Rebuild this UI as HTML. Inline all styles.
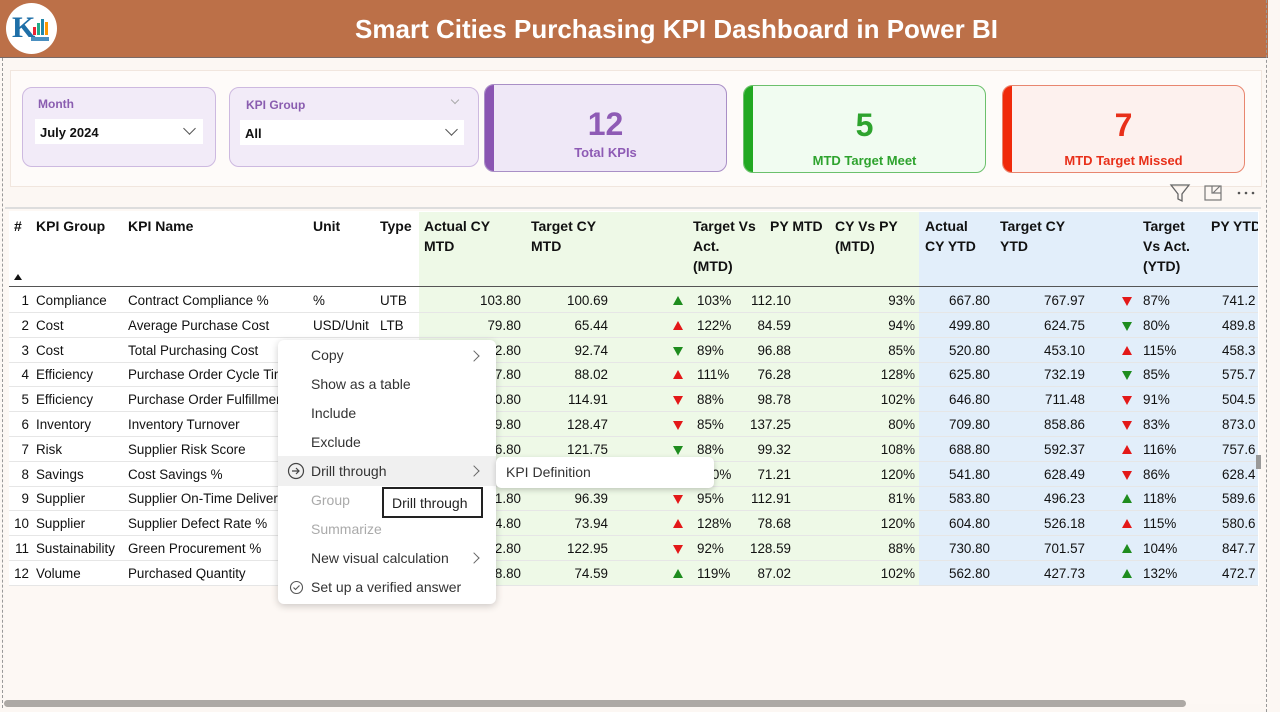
<!DOCTYPE html>
<html><head><meta charset="utf-8">
<style>
*{margin:0;padding:0;box-sizing:border-box}
body{width:1280px;height:712px;overflow:hidden;background:#FCF7F3;font-family:"Liberation Sans",sans-serif;position:relative;color:#222}
.abs{position:absolute}
.hdr{left:0;top:0;width:1268px;height:58px;background:#BC7048;border-bottom:1px solid #7a6a66}
.title{left:0;width:1268px;top:14px;text-align:center;color:#fff;font-weight:bold;font-size:26px;padding-left:85px}
.logo{left:6px;top:3px;width:51px;height:51px;border-radius:50%;background:#fff}
.panel{left:10px;top:70px;width:1252px;height:117px;background:#FEFBF9;border:1px solid #F1E6DE}
.slicer{background:#F2EBF8;border:1px solid #CDB9E0;border-radius:10px}
.slab{font-size:12px;font-weight:bold;color:#8A5DB0}
.dd{background:#fff;font-size:13px;font-weight:bold;color:#111;padding:6px 5px}
.chev{position:absolute;width:9px;height:9px;border-right:1.3px solid #555;border-bottom:1.3px solid #555;transform:rotate(45deg)}
.card{border-radius:10px;overflow:hidden;text-align:center}
.card .bar{position:absolute;left:0;top:0;bottom:0;width:9px}
.num{font-size:32px;font-weight:bold}
.lab{font-size:13px;font-weight:bold}
.th{font-size:14px;font-weight:bold;color:#111;line-height:20px;white-space:nowrap}
.cell{font-size:13.4px;color:#111;position:absolute;white-space:nowrap}
.r{text-align:right}
.menu{left:278px;top:340px;width:218px;height:264px;background:#fff;border-radius:6px;box-shadow:0 2px 8px rgba(0,0,0,.2)}
.mi{position:absolute;left:33px;font-size:14px;color:#333}
.gt{color:#aaa}
.mch{position:absolute;width:8px;height:8px;border-right:1.2px solid #666;border-top:1.2px solid #666;transform:rotate(45deg)}
</style></head><body>
<div class="abs hdr"></div>
<div class="abs title">Smart Cities Purchasing KPI Dashboard in Power BI</div>
<div class="abs logo">
<svg width="51" height="51" viewBox="0 0 51 51"><text x="6" y="34" font-family="Liberation Serif" font-size="30" font-weight="bold" fill="#1e6fa8">K</text><rect x="27" y="24" width="3" height="8" fill="#e23"/><rect x="31" y="20" width="3" height="12" fill="#2a8"/><rect x="35" y="16" width="3" height="16" fill="#28a"/><rect x="39" y="19" width="3" height="13" fill="#f90"/><rect x="25" y="34" width="18" height="4" fill="#4a8fc0"/></svg>
</div>
<div class="abs" style="left:1266px;top:0;width:1px;height:712px;border-left:1px dashed #999"></div>
<div class="abs" style="left:2px;top:58px;width:1px;height:650px;border-left:1px dashed #999"></div>

<div class="abs panel"></div>
<div class="abs slicer" style="left:22px;top:87px;width:194px;height:80px"></div>
<div class="abs slab" style="left:38px;top:97px">Month</div>
<div class="abs dd" style="left:35px;top:119px;width:168px;height:25px">July 2024</div>
<div class="chev" style="left:185px;top:124px"></div>
<div class="abs slicer" style="left:229px;top:87px;width:250px;height:80px"></div>
<div class="abs slab" style="left:246px;top:98px">KPI Group</div>
<div class="chev" style="left:452px;top:97px;width:6px;height:6px;border-color:#aaa"></div>
<div class="abs dd" style="left:240px;top:120px;width:224px;height:25px">All</div>
<div class="chev" style="left:447px;top:125px"></div>

<div class="abs card" style="left:484px;top:84px;width:243px;height:88px;background:#EFE8F7;border:1px solid #A98FC6"><div class="bar" style="background:#8A55B2"></div><div class="num" style="color:#8E5BB5;margin-top:21px;line-height:36px">12</div><div class="lab" style="color:#8E5BB5;margin-top:3px">Total KPIs</div></div>
<div class="abs card" style="left:743px;top:85px;width:243px;height:88px;background:#F1FCF1;border:1px solid #6CC06C"><div class="bar" style="background:#22A822"></div><div class="num" style="color:#2EA32E;margin-top:21px;line-height:36px">5</div><div class="lab" style="color:#2EA32E;margin-top:10px">MTD Target Meet</div></div>
<div class="abs card" style="left:1002px;top:85px;width:243px;height:88px;background:#FDF1EE;border:1px solid #E8866F"><div class="bar" style="background:#F02A0A"></div><div class="num" style="color:#E8301A;margin-top:21px;line-height:36px">7</div><div class="lab" style="color:#E8301A;margin-top:10px">MTD Target Missed</div></div>

<svg class="abs" style="left:1168px;top:182px" width="95" height="22"><path d="M3 3h18l-7 9v7l-4-2v-5z" fill="none" stroke="#666" stroke-width="1.3"/><rect x="37" y="4" width="16" height="14" fill="none" stroke="#777" stroke-width="1.2"/><path d="M44 4v7h9M45 11l7-7" fill="none" stroke="#777" stroke-width="1.2"/><circle cx="71" cy="11" r="1.3" fill="#555"/><circle cx="78" cy="11" r="1.3" fill="#555"/><circle cx="85" cy="11" r="1.3" fill="#555"/></svg>

<!-- table -->
<div class="abs" style="left:5px;top:207px;width:1256px;height:497px;background:#FDF8F4"></div>
<div class="abs" style="left:5px;top:207px;width:1256px;height:2px;background:#ddd"></div>
<div class="abs" style="left:9px;top:211px;width:1250px;height:375px;background:#fff"></div>
<div class="abs" style="left:419px;top:212px;width:500px;height:373px;background:#EEF9E7"></div>
<div class="abs" style="left:919px;top:212px;width:339px;height:373px;background:#E2EEFA"></div>
<div class="abs" style="left:9px;top:286px;width:1249px;height:1px;background:#555"></div>
<div class="abs th" style="left:14px;top:216px">#</div>
<div class="abs" style="left:14px;top:274px;width:0;height:0;border-left:4px solid transparent;border-right:4px solid transparent;border-bottom:6px solid #111"></div>
<div class="abs th" style="left:36px;top:216px">KPI Group</div>
<div class="abs th" style="left:128px;top:216px">KPI Name</div>
<div class="abs th" style="left:313px;top:216px">Unit</div>
<div class="abs th" style="left:380px;top:216px">Type</div>
<div class="abs th" style="left:424px;top:216px">Actual CY<br>MTD</div>
<div class="abs th" style="left:531px;top:216px">Target CY<br>MTD</div>
<div class="abs th" style="left:693px;top:216px">Target Vs<br>Act.<br>(MTD)</div>
<div class="abs th" style="left:770px;top:216px">PY MTD</div>
<div class="abs th" style="left:835px;top:216px">CY Vs PY<br>(MTD)</div>
<div class="abs th" style="left:925px;top:216px">Actual<br>CY YTD</div>
<div class="abs th" style="left:1000px;top:216px">Target CY<br>YTD</div>
<div class="abs th" style="left:1143px;top:216px">Target<br>Vs Act.<br>(YTD)</div>
<div class="abs th" style="left:1211px;top:216px;width:47px;overflow:hidden">PY YTD</div>
<div id="rows"></div>
<script>
var d=[
[1,"Compliance","Contract Compliance %","%","UTB","103.80","100.69","ug","103%","112.10","93%","667.80","767.97","dr","87%","741.2"],
[2,"Cost","Average Purchase Cost","USD/Unit","LTB","79.80","65.44","ur","122%","84.59","94%","499.80","624.75","dg","80%","489.8"],
[3,"Cost","Total Purchasing Cost","","","92.80","92.74","dg","89%","96.88","85%","520.80","453.10","ur","115%","458.3"],
[4,"Efficiency","Purchase Order Cycle Time","","","87.80","88.02","ur","111%","76.28","128%","625.80","732.19","dg","85%","575.7"],
[5,"Efficiency","Purchase Order Fulfillment","","","100.80","114.91","dr","88%","98.78","102%","646.80","711.48","dr","91%","504.5"],
[6,"Inventory","Inventory Turnover","","","109.80","128.47","dr","85%","137.25","80%","709.80","858.86","dr","83%","873.0"],
[7,"Risk","Supplier Risk Score","","","106.80","121.75","dg","88%","99.32","108%","688.80","592.37","ur","116%","757.6"],
[8,"Savings","Cost Savings %","","","85.80","71.21","ur","120%","71.21","120%","541.80","628.49","dr","86%","628.4"],
[9,"Supplier","Supplier On-Time Delivery","","","91.80","96.39","dr","95%","112.91","81%","583.80","496.23","ug","118%","589.6"],
[10,"Supplier","Supplier Defect Rate %","","","94.80","73.94","ur","128%","78.68","120%","604.80","526.18","ur","115%","580.6"],
[11,"Sustainability","Green Procurement %","","","112.80","122.95","dr","92%","128.59","88%","730.80","701.57","ug","104%","847.7"],
[12,"Volume","Purchased Quantity","","","88.80","74.59","ug","119%","87.02","102%","562.80","427.73","ug","132%","472.7"]];
function tri(t,x,y){var c=t[1]=="g"?"#1E8C1E":"#E31818";return t[0]=="u"?'<div style="position:absolute;left:'+x+'px;top:'+(y+3)+'px;border-left:5px solid transparent;border-right:5px solid transparent;border-bottom:9px solid '+c+'"></div>':'<div style="position:absolute;left:'+x+'px;top:'+(y+4)+'px;border-left:5px solid transparent;border-right:5px solid transparent;border-top:9px solid '+c+'"></div>';}
var h="";
d.forEach(function(r,i){var y=293+i*24.8;
h+='<div style="position:absolute;left:9px;top:'+(y+19)+'px;width:1249px;height:1px;background:#E6E6E6"></div>';
h+='<div class="cell r" style="left:10px;width:19px;top:'+y+'px">'+r[0]+'</div>';
h+='<div class="cell" style="left:36px;top:'+y+'px">'+r[1]+'</div>';
h+='<div class="cell" style="left:128px;top:'+y+'px;width:150px;overflow:hidden">'+r[2]+'</div>';
h+='<div class="cell" style="left:313px;top:'+y+'px">'+r[3]+'</div>';
h+='<div class="cell" style="left:380px;top:'+y+'px">'+r[4]+'</div>';
h+='<div class="cell r" style="left:440px;width:81px;top:'+y+'px">'+r[5]+'</div>';
h+='<div class="cell r" style="left:530px;width:78px;top:'+y+'px">'+r[6]+'</div>';
h+=tri(r[7],673,y);
h+='<div class="cell" style="left:697px;top:'+y+'px">'+r[8]+'</div>';
h+='<div class="cell r" style="left:740px;width:51px;top:'+y+'px">'+r[9]+'</div>';
h+='<div class="cell r" style="left:850px;width:65px;top:'+y+'px">'+r[10]+'</div>';
h+='<div class="cell r" style="left:920px;width:70px;top:'+y+'px">'+r[11]+'</div>';
h+='<div class="cell r" style="left:1000px;width:85px;top:'+y+'px">'+r[12]+'</div>';
h+=tri(r[13],1122,y);
h+='<div class="cell" style="left:1143px;top:'+y+'px">'+r[14]+'</div>';
h+='<div class="cell" style="left:1222px;top:'+y+'px;width:36px;overflow:hidden">'+r[15]+'</div>';
});
document.getElementById("rows").innerHTML=h;
</script>

<!-- scrollbar -->
<div class="abs" style="left:4px;top:700px;width:1182px;height:7px;background:#ADA9A5;border-radius:4px"></div>
<div class="abs" style="left:1256px;top:455px;width:5px;height:14px;background:#999"></div>

<!-- context menu -->
<div class="abs menu">
<div class="mi" style="top:7px">Copy</div><div class="mch" style="left:192px;top:12px"></div>
<div class="mi" style="top:36px">Show as a table</div>
<div class="mi" style="top:65px">Include</div>
<div class="mi" style="top:94px">Exclude</div>
<div style="position:absolute;left:0;top:116px;width:218px;height:30px;background:#F0F0F0"></div>
<svg style="position:absolute;left:9px;top:122px" width="18" height="18"><circle cx="9" cy="9" r="7.5" fill="none" stroke="#444" stroke-width="1.2"/><path d="M5 9h7M9 6l3 3-3 3" fill="none" stroke="#444" stroke-width="1.2"/></svg>
<div class="mi" style="top:123px">Drill through</div><div class="mch" style="left:192px;top:127px"></div>
<div class="mi gt" style="top:152px">Group</div>
<div class="mi gt" style="top:181px">Summarize</div>
<div class="mi" style="top:210px">New visual calculation</div><div class="mch" style="left:192px;top:214px"></div>
<svg style="position:absolute;left:11px;top:240px" width="15" height="15"><circle cx="7.5" cy="7.5" r="6" fill="none" stroke="#555" stroke-width="1.1"/><path d="M4.5 7.5l2 2 4-4" fill="none" stroke="#555" stroke-width="1.1"/></svg>
<div class="mi" style="top:239px">Set up a verified answer</div>
</div>
<div class="abs" style="left:496px;top:457px;width:218px;height:31px;background:#fff;border-radius:5px;box-shadow:0 2px 6px rgba(0,0,0,.2)"><div style="position:absolute;left:10px;top:7px;font-size:14px;color:#333">KPI Definition</div></div>
<div class="abs" style="left:382px;top:487px;width:101px;height:31px;background:#fff;border:2px solid #222;font-size:14px;color:#222;padding:6px 0 0 8px">Drill through</div>
</body></html>
